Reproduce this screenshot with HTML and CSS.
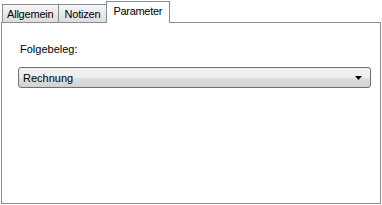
FILE: index.html
```html
<!DOCTYPE html>
<html>
  <head>
    <meta charset="UTF-8">
    <title>Parameter</title>
    <link rel="stylesheet" href="styles.css">
  </head>
  <body>
    <div class="window">
      <div class="tabs">
        <div class="tab">Allgemein</div>
        <div class="tab tab-notes">Notizen</div>
        <div class="tab active">Parameter</div>
      </div>
      <div class="panel">
        <label class="field-label" for="folgebeleg">Folgebeleg:</label>
        <div class="combo" id="folgebeleg">
          <span class="combo-value">Rechnung</span>
          <svg class="combo-arrow" width="7" height="4" viewBox="0 0 7 4">
            <path d="M0 0H7L3.5 4Z" fill="#000"/>
          </svg>
        </div>
      </div>
    </div>
  </body>
</html>
```

FILE: styles.css
```css
/* Classic tab control */
body {
  margin: 0;
  background-color: #FFFFFF;
  color: #000000;
  font-family: 'Liberation Sans', Arial, sans-serif;
  font-size: 11px;
}

.window {
  width: 382px;
  height: 205px;
}

.tabs {
  display: flex;
  align-items: flex-end;
  height: 22px;
  padding-left: 2px;
}

.tab {
  position: relative;
  height: 18px;
  line-height: 18px;
  padding: 0 4px;
  margin-right: -1px;
  box-sizing: border-box;
  border: 1px solid #898C95;
  border-bottom: none;
  letter-spacing: -0.2px;
  background: linear-gradient(#F6F6F6, #DCDCDC);
}

.tab-notes {
  padding: 0 6px;
}

.tab.active {
  height: 22px;
  line-height: 18px;
  padding: 0 7px 0 6px;
  margin-bottom: -1px;
  background: #FFFFFF;
  letter-spacing: -0.3px;
  z-index: 1;
}

/* Page body */
.panel {
  box-sizing: border-box;
  width: 380px;
  height: 182px;
  margin-left: 1px;
  border: 1px solid #898C95;
  padding: 20px 9px 0 16px;
  display: flex;
  flex-direction: column;
}

.field-label {
  margin-left: 2px;
  margin-bottom: 12px;
}

.combo {
  display: flex;
  align-items: center;
  justify-content: space-between;
  height: 21px;
  box-sizing: border-box;
  border: 1px solid #707070;
  border-radius: 3px;
  padding: 0 8px 0 4px;
  background: linear-gradient(#F3F3F3 0%, #ECECEC 50%, #DFDFDF 51%, #D2D2D2 100%);
}
```
